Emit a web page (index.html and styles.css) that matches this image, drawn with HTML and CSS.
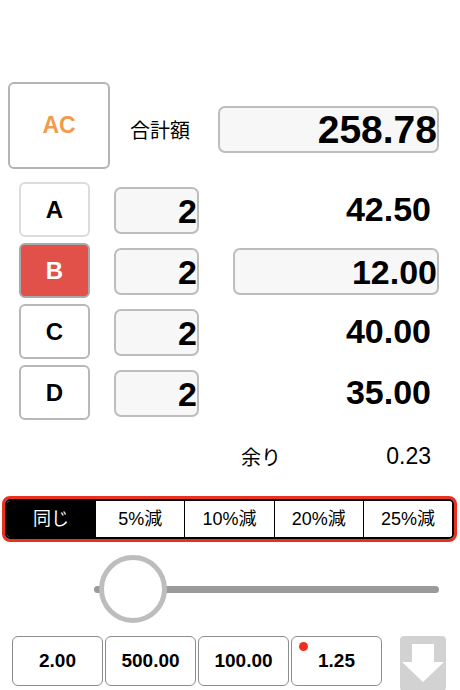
FILE: index.html
```html
<!DOCTYPE html>
<html lang="ja">
<head>
    <meta charset="UTF-8">
    <meta name="viewport" content="width=device-width, initial-scale=1.0">
    <title>割り勘</title>
    <link rel="stylesheet" href="styles.css">
</head>
<body>

    <!-- Total -->
    <div class="header">
        <button class="ac-btn">AC</button>
        <div class="total-label">合計額</div>
        <div class="field total-field">258.78</div>
    </div>

    <!-- Persons -->
    <div class="rows">
        <div class="row">
            <button class="letter letter-light">A</button>
            <div class="field qty">2</div>
            <div class="amount">42.50</div>
        </div>
        <div class="row">
            <button class="letter letter-active">B</button>
            <div class="field qty">2</div>
            <div class="field amount-field">12.00</div>
        </div>
        <div class="row">
            <button class="letter">C</button>
            <div class="field qty">2</div>
            <div class="amount">40.00</div>
        </div>
        <div class="row">
            <button class="letter">D</button>
            <div class="field qty">2</div>
            <div class="amount">35.00</div>
        </div>
    </div>

    <div class="remainder">
        <span class="remainder-label">余り</span>
        <span class="remainder-value">0.23</span>
    </div>

    <!-- Discount selector -->
    <div class="segment-wrap">
        <div class="segment">
            <div class="seg seg-on">同じ</div>
            <div class="seg">5%減</div>
            <div class="seg">10%減</div>
            <div class="seg">20%減</div>
            <div class="seg">25%減</div>
        </div>
    </div>

    <!-- Slider -->
    <div class="slider">
        <div class="track"></div>
        <div class="thumb"></div>
    </div>

    <!-- Presets -->
    <div class="presets">
        <button class="preset">2.00</button>
        <button class="preset">500.00</button>
        <button class="preset">100.00</button>
        <button class="preset"><span class="dot"></span>1.25</button>
        <button class="down-btn">
            <svg width="46" height="55" viewBox="0 0 46 55">
                <polygon points="12,8 34,8 34,26 44,26 23,46 2,26 12,26" fill="#fff"/>
            </svg>
        </button>
    </div>

</body>
</html>
```

FILE: styles.css
```css
body {
    margin: 0;
    font-family: "Liberation Sans", "Noto Sans CJK JP", sans-serif;
    color: #000;
    background: #fff;
    overflow: hidden;
}
button {
    font-family: inherit;
    padding: 0;
    cursor: pointer;
}

/* header */
.header {
    display: flex;
    align-items: center;
    padding: 82px 0 0 8px;
}
.ac-btn {
    width: 102px;
    height: 87px;
    background: #fff;
    border: 2px solid #b4b4b4;
    border-radius: 6px;
    color: #f29b4c;
    font-size: 23px;
    font-weight: bold;
}
.total-label {
    width: 108px;
    padding-left: 20px;
    box-sizing: border-box;
    font-size: 20px;
    margin-top: 8px;
}
.field {
    box-sizing: border-box;
    background: #f7f7f7;
    border: 2px solid #bdbdbd;
    border-radius: 7px;
    text-align: right;
    font-weight: bold;
    white-space: nowrap;
}
.total-field {
    width: 221px;
    height: 47px;
    margin-top: 8px;
    font-size: 39px;
    line-height: 43px;
    padding-right: 0;
}

/* rows */
.rows {
    display: flex;
    flex-direction: column;
    gap: 6px;
    margin-top: 13px;
    padding-left: 19px;
}
.row {
    display: flex;
    align-items: center;
    height: 55px;
}
.letter {
    width: 71px;
    height: 55px;
    margin-right: 24px;
    background: #fff;
    border: 2px solid #b8b8b8;
    border-radius: 6px;
    font-size: 24px;
    font-weight: bold;
    color: #000;
}
.letter-light {
    border-color: #dcdcdc;
}
.letter-active {
    background: #e2504a;
    border-color: #a9a9a9;
    color: #fff;
}
.qty {
    width: 85px;
    height: 47px;
    margin-right: 34px;
    margin-top: 2px;
    font-size: 34px;
    line-height: 45px;
    padding-right: 0;
    text-indent: 0;
}
.amount {
    width: 198px;
    text-align: right;
    font-size: 34px;
    font-weight: bold;
}
.amount-field {
    width: 206px;
    height: 47px;
    margin-top: 2px;
    font-size: 34px;
    line-height: 44px;
}

/* remainder */
.remainder {
    display: flex;
    justify-content: space-between;
    align-items: center;
    width: 190px;
    height: 30px;
    margin: 21px 0 0 241px;
}
.remainder-label {
    font-size: 20px;
}
.remainder-value {
    font-size: 23px;
}

/* segmented control */
.segment-wrap {
    margin: 25px 3px 0 2px;
    border: 3px solid #e8321f;
    border-radius: 8px;
}
.segment {
    display: flex;
    border: 2px solid #000;
    border-radius: 5px;
    overflow: hidden;
}
.seg {
    flex: 1;
    height: 36px;
    line-height: 36px;
    text-align: center;
    font-size: 18px;
    border-left: 1px solid #000;
    background: #fff;
}
.seg:first-child {
    border-left: none;
}
.seg-on {
    background: #000;
    color: #fff;
}

/* slider */
.slider {
    position: relative;
    height: 68px;
    margin-top: 13px;
}
.track {
    position: absolute;
    left: 94px;
    width: 345px;
    top: 31px;
    height: 7px;
    border-radius: 4px;
    background: #9a9a9a;
}
.thumb {
    position: absolute;
    left: 99px;
    top: 0;
    width: 68px;
    height: 68px;
    box-sizing: border-box;
    border: 5px solid #bdbdbd;
    border-radius: 50%;
    background: #fff;
}

/* presets */
.presets {
    display: flex;
    align-items: flex-start;
    gap: 2px;
    margin-top: 13px;
    padding-left: 12px;
}
.preset {
    position: relative;
    width: 91px;
    height: 50px;
    background: #fff;
    border: 1px solid #8c8c8c;
    border-radius: 6px;
    font-size: 19px;
    font-weight: bold;
    color: #000;
}
.dot {
    position: absolute;
    left: 7px;
    top: 5px;
    width: 9px;
    height: 9px;
    border-radius: 50%;
    background: #f0301a;
}
.down-btn {
    width: 46px;
    height: 55px;
    margin-left: 16px;
    border: none;
    border-radius: 4px;
    background: #d2d2d2;
}
.down-btn svg {
    display: block;
}
```
